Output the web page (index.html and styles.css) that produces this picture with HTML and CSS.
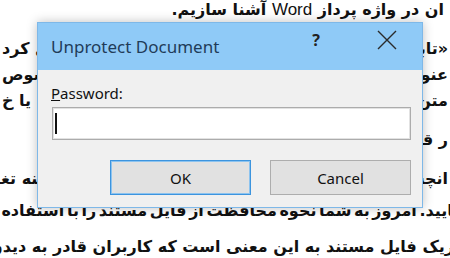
FILE: index.html
```html
<!DOCTYPE html>
<html lang="fa">
<head>
  <meta charset="UTF-8" />
  <meta name="viewport" content="width=device-width, initial-scale=1.0" />
  <title>Unprotect Document</title>
  <link rel="stylesheet" href="styles.css">
</head>
<body>
  <div class="page">
    <!-- Word document behind the dialog -->
    <div class="doc" dir="rtl">
      <div class="line line-first"><span class="last-line">ان در واژه پرداز <span class="latin">Word</span> آشنا سازیم.</span></div>
      <div class="line gap-para"><span>«تابع گزینه</span><span>را تبدیل کرد</span></div>
      <div class="line"><span>عنوان</span><span>مخصوص</span></div>
      <div class="line"><span>متن</span><span>قابل یا خ</span></div>
      <div class="line gap-para"><span>ر قابل</span><span></span></div>
      <div class="line gap-para"><span>انچه</span><span class="cut-left">گزینه تغییر</span></div>
      <div class="line gap-small"><span class="full">نمایید. امروز به شما نحوه محافظت از فایل مستند را با استفاده</span></div>
      <div class="line gap-last"><span class="full-end">ریک فایل مستند به این معنی است که کاربران قادر به دیدن و ویرایش</span></div>
    </div>

    <div class="dialog">
      <div class="titlebar">
        <span class="title">Unprotect Document</span>
        <span class="help">?</span>
        <span class="close">
          <svg width="20" height="20" viewBox="0 0 20 20">
            <path d="M1 1 L19 19 M19 1 L1 19" stroke="#2b2b2b" stroke-width="1.4" fill="none"/>
          </svg>
        </span>
      </div>
      <div class="dialog-body">
        <div class="field-label"><u>P</u>assword:</div>
        <div class="text-input"><span class="caret"></span></div>
        <div class="buttons">
          <button class="btn btn-default">OK</button>
          <button class="btn">Cancel</button>
        </div>
      </div>
    </div>
  </div>
</body>
</html>
```

FILE: styles.css
```css
html, body {
  margin: 0;
  padding: 0;
  overflow: hidden;
  height: 100vh;
}
body {
  background-color: #fff;
  font-family: "DejaVu Sans", "Liberation Sans", sans-serif;
}
.page {
  position: relative;
  width: 450px;
  height: 258px;
  overflow: hidden;
}

/* Document text */
.doc {
  display: flex;
  flex-direction: column;
  font-size: 16px;
  font-weight: bold;
  color: #111;
}
.line {
  height: 26px;
  line-height: 26px;
  display: flex;
  justify-content: space-between;
  white-space: nowrap;
  padding: 0 2px;
}
.line-first {
  margin-top: -3px;
  padding-right: 6px;
}
.latin {
  font-family: "Liberation Sans", Arial, sans-serif;
  font-size: 17px;
  font-weight: normal;
}
.gap-para {
  margin-top: 13px;
}
.gap-small {
  margin-top: 6px;
}
.gap-last {
  margin-top: 10px;
}
.cut-left {
  margin-left: -24px;
}
.full {
  margin-right: -22px;
  word-spacing: -3px;
}
.full-end {
  margin-right: -6px;
}

/* Dialog */
.dialog {
  position: absolute;
  left: 37px;
  top: 22px;
  width: 386px;
  box-sizing: border-box;
  border: 1px solid #7eb8e8;
  background-color: #f0f0f0;
  box-shadow: 0 0 10px rgba(0, 0, 0, 0.25);
  font-family: "Noto Sans", "Open Sans", sans-serif;
  font-weight: normal;
}
.titlebar {
  height: 47px;
  background-color: #8fcaf7;
  display: flex;
  align-items: center;
  padding: 0 12px 0 13px;
}
.title {
  flex: 1;
  font-size: 17px;
  color: #1f3c59;
}
.help {
  width: 20px;
  text-align: center;
  font-size: 16px;
  font-weight: bold;
  color: #222;
  margin-right: 38px;
  margin-top: -13px;
}
.close {
  width: 46px;
  height: 47px;
  display: flex;
  align-items: center;
  justify-content: center;
  margin-top: -14px;
}

.dialog-body {
  padding: 13px 11px 12px 13px;
}
.field-label {
  font-size: 15px;
  line-height: 20px;
  color: #111;
}
.text-input {
  margin-top: 4px;
  margin-left: 1px;
  height: 33px;
  box-sizing: border-box;
  background-color: #fff;
  border: 1px solid #acacac;
  box-shadow: inset 0 0 0 1px #e2e2e2;
  display: flex;
  align-items: center;
  padding-left: 2px;
}
.caret {
  width: 2px;
  height: 21px;
  background-color: #111;
}
.buttons {
  margin-top: 20px;
  display: flex;
  justify-content: flex-end;
  gap: 19px;
}
.btn {
  width: 141px;
  height: 35px;
  box-sizing: border-box;
  background-color: #e1e1e1;
  border: 1px solid #adadad;
  font-family: "Noto Sans", "Open Sans", sans-serif;
  font-size: 15px;
  color: #111;
  padding: 0;
}
.btn-default {
  border-color: #3c94de;
  box-shadow: inset 0 0 0 1px #8cc3ef;
}
```
